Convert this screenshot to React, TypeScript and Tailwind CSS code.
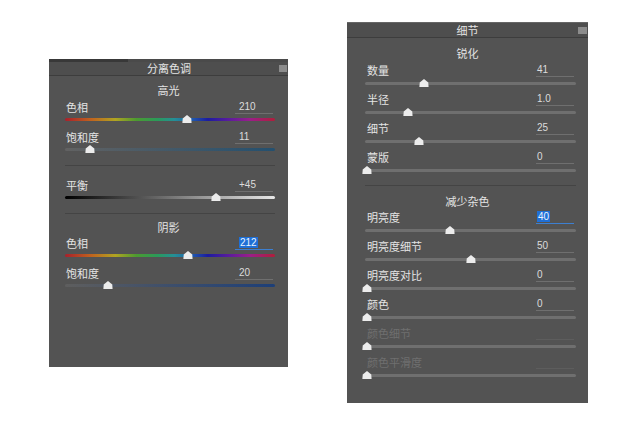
import React from 'react';

const HUE =
  'bg-[linear-gradient(to_right,#a8202c_0%,#c0601e_12%,#b0a422_24%,#4c9a30_34%,#2a9a5a_44%,#258f96_52%,#1f5fae_60%,#1c1ca0_68%,#5a1c9e_78%,#9a1e8a_88%,#b01e3a_100%)]';
const SAT_HI = 'bg-[linear-gradient(to_right,#626262,#24506f)]';
const SAT_SH = 'bg-[linear-gradient(to_right,#5e5e5e,#1d3f78)]';
const BAL = 'bg-[linear-gradient(to_right,#000000,#e8e8e8)]';
const GRAY = 'bg-[#6f6f6f]';

type RowProps = {
  label: string;
  value: string;
  pct: number;
  track: string;
  hl?: boolean;
  dim?: boolean;
};

function Thumb({ pct }: { pct: number }) {
  return (
    <svg
      width="10"
      height="8"
      viewBox="0 0 10 8"
      className="absolute top-[-3px]"
      style={{ left: `calc(2px + (100% - 4px) * ${pct / 100} - 5px)` }}
    >
      <polygon points="5,0 9.3,3.4 9.6,8 0.4,8 0.7,3.4" fill="#ececec" />
    </svg>
  );
}

function Value({ value, hl, dim, pad }: { value: string; hl?: boolean; dim?: boolean; pad: string }) {
  const line = hl ? 'border-[#3d7fd0]' : dim ? 'border-[#5d5d5d]' : 'border-[#6f6f6f]';
  return (
    <div
      className={`ml-auto mr-[2px] h-[14px] w-[38px] border-b ${line} ${pad} font-['Liberation_Sans',sans-serif] text-[10px] leading-[13px] text-[#dcdcdc]`}
    >
      {hl ? <span className="bg-[#1f6fd6] px-[1px] text-[#eaf4ff]">{value}</span> : value}
    </div>
  );
}

function LeftRow({ label, value, pct, track, hl }: RowProps) {
  return (
    <div className="h-[30px] pl-[16px] pr-[13px]">
      <div className="flex h-[14px] items-center">
        <span className="ml-[1px] text-[11px] leading-[14px] text-[#e4e4e4]">{label}</span>
        <Value value={value} hl={hl} pad="pl-[4px]" />
      </div>
      <div className={`relative mt-[4px] h-[3px] rounded-full ${track}`}>
        <Thumb pct={pct} />
      </div>
    </div>
  );
}

function RightRow({ label, value, pct, track, hl, dim }: RowProps) {
  return (
    <div className="h-[29px] pl-[18px] pr-[12px]">
      <div className="flex h-[14px] items-center">
        <span className={`ml-[2px] text-[11px] leading-[14px] ${dim ? 'text-[#6f6f6f]' : 'text-[#e4e4e4]'}`}>
          {label}
        </span>
        <Value value={value} hl={hl} dim={dim} pad="pl-[1px]" />
      </div>
      <div className={`relative mt-[5px] h-[3px] rounded-full ${track}`}>
        <Thumb pct={pct} />
      </div>
    </div>
  );
}

function Heading({ text, cls }: { text: string; cls: string }) {
  return <div className={`h-[14px] text-center text-[11px] leading-[14px] text-[#e4e4e4] ${cls}`}>{text}</div>;
}

export default function App() {
  return (
    <div className="flex h-[427px] w-[640px] items-start overflow-hidden bg-white font-['Noto_Sans_CJK_SC','Liberation_Sans',sans-serif]">
      {/* 分离色调 */}
      <div className="ml-[49px] mt-[59px] h-[308px] w-[239px] bg-[#535353]">
        <div className="flex h-[3px]">
          <div className="w-[79px] bg-[#383838]" />
          <div className="flex-1 bg-[#4a4a4a]" />
        </div>
        <div className="flex h-[14px] items-center border-b border-[#3d3d3d] bg-[#4e4e4e]">
          <div className="flex-1 pl-[10px] text-center text-[11px] leading-[13px] text-[#e4e4e4]">分离色调</div>
          <div className="mr-[1px] h-[7px] w-[8px] bg-[#8c8c8c]" />
        </div>
        <Heading text="高光" cls="mt-[7px] mb-[3px]" />
        <LeftRow label="色相" value="210" pct={58.3} track={HUE} />
        <LeftRow label="饱和度" value="11" pct={11} track={SAT_HI} />
        <div className="ml-[16px] mr-[13px] mt-[5px] mb-[12px] h-px bg-[#444444]" />
        <LeftRow label="平衡" value="+45" pct={72.5} track={BAL} />
        <div className="ml-[16px] mr-[13px] mt-[5px] h-px bg-[#444444]" />
        <Heading text="阴影" cls="mt-[6px] mb-[2px]" />
        <LeftRow label="色相" value="212" pct={58.9} track={HUE} hl />
        <LeftRow label="饱和度" value="20" pct={20} track={SAT_SH} />
      </div>

      {/* 细节 */}
      <div className="ml-[59px] mt-[22px] h-[381px] w-[241px] bg-[#535353]">
        <div className="h-px bg-[#666666]" />
        <div className="flex h-[15px] items-center border-b border-[#3d3d3d] bg-[#4e4e4e]">
          <div className="flex-1 pl-[10px] text-center text-[11px] leading-[14px] text-[#e4e4e4]">细节</div>
          <div className="mr-[1px] h-[7px] w-[9px] bg-[#8c8c8c]" />
        </div>
        <Heading text="锐化" cls="mt-[8px] mb-[3px]" />
        <RightRow label="数量" value="41" pct={27.3} track={GRAY} />
        <RightRow label="半径" value="1.0" pct={20} track={GRAY} />
        <RightRow label="细节" value="25" pct={25} track={GRAY} />
        <RightRow label="蒙版" value="0" pct={0} track={GRAY} />
        <div className="ml-[18px] mr-[12px] mt-[6px] h-px bg-[#444444]" />
        <Heading text="减少杂色" cls="mt-[8px] mb-[2px]" />
        <RightRow label="明亮度" value="40" pct={40} track={GRAY} hl />
        <RightRow label="明亮度细节" value="50" pct={50} track={GRAY} />
        <RightRow label="明亮度对比" value="0" pct={0} track={GRAY} />
        <RightRow label="颜色" value="0" pct={0} track={GRAY} />
        <RightRow label="颜色细节" value="" pct={0} track={GRAY} dim />
        <RightRow label="颜色平滑度" value="" pct={0} track={GRAY} dim />
      </div>
    </div>
  );
}
